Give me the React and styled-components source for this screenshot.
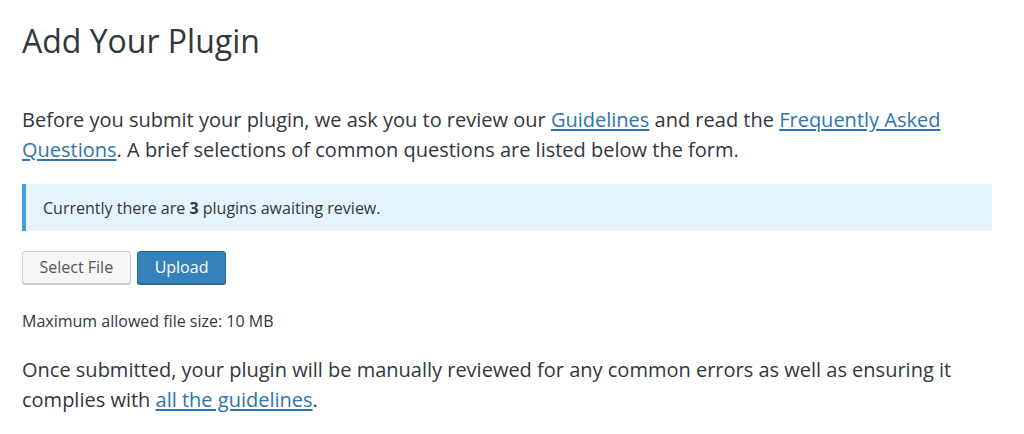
import React from "react";
import styled, { createGlobalStyle } from "styled-components";

const Global = createGlobalStyle`
  html, body { margin: 0; padding: 0; background: #fff; }
  body { font-family: "Open Sans", "Noto Sans", sans-serif; color: #32373c; }
  * { box-sizing: border-box; }
`;

const Page = styled.main`
  padding: 0 32px 0 22px;
  width: 1024px;
`;

const Title = styled.h1`
  margin: 0;
  padding-top: 19px;
  font-size: 32px;
  line-height: 44px;
  font-weight: 400;
  color: #32373c;
`;

const Para = styled.p`
  margin: ${(p) => p.$mt || 0}px 0 0;
  font-size: 20px;
  line-height: 30px;
  color: #32373c;
  max-width: 970px;
`;

const Link = styled.a`
  color: #2e74ad;
  text-decoration: underline;
  text-underline-offset: 2px;
`;

const Notice = styled.div`
  margin-top: 19px;
  width: 970px;
  height: 47px;
  display: flex;
  align-items: center;
  padding-left: 17px;
  background: #e5f3fa;
  border-left: 4px solid #46a0d4;
  font-size: 16px;
  color: #32373c;
  b { font-weight: 700; }
`;

const Actions = styled.div`
  margin-top: 20px;
  display: flex;
  gap: 6px;
`;

const Button = styled.button`
  height: 33px;
  padding: 0 ${(p) => (p.$primary ? 17 : 16.5)}px 1px;
  font-family: "Open Sans", sans-serif;
  font-size: 16px;
  border-radius: 3px;
  border: 1px solid ${(p) => (p.$primary ? "#2b6a9a" : "#cccccc")};
  background: ${(p) => (p.$primary ? "#3582bb" : "#f7f7f7")};
  color: ${(p) => (p.$primary ? "#ffffff" : "#555555")};
  box-shadow: ${(p) => (p.$primary ? "0 1px 0 #2a6a96" : "0 1px 0 #cccccc")};
  cursor: pointer;
`;

const Small = styled.p`
  margin: 25px 0 0;
  font-size: 16px;
  line-height: 24px;
  color: #32373c;
`;

export default function App() {
  return (
    <>
      <Global />
      <Page>
        <Title>Add Your Plugin</Title>
        <Para $mt={42}>
          Before you submit your plugin, we ask you to review our{" "}
          <Link href="#">Guidelines</Link> and read the{" "}
          <Link href="#">Frequently Asked Questions</Link>. A brief selections of common
          questions are listed below the form.
        </Para>
        <Notice>
          <span>
            Currently there are <b>3</b> plugins awaiting review.
          </span>
        </Notice>
        <Actions>
          <Button>Select File</Button>
          <Button $primary>Upload</Button>
        </Actions>
        <Small>Maximum allowed file size: 10 MB</Small>
        <Para $mt={22}>
          Once submitted, your plugin will be manually reviewed for any common errors as well
          as ensuring it complies with <Link href="#">all the guidelines</Link>.
        </Para>
      </Page>
    </>
  );
}
